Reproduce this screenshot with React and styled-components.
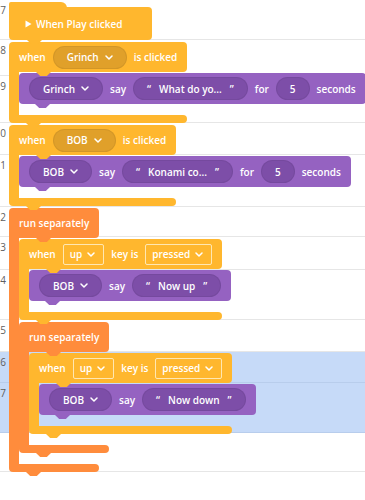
import React from 'react';
import styled, { createGlobalStyle, css } from 'styled-components';

const palette = {
  event: { bg: '#ffb72e', field: '#e0a02a' },
  looks: { bg: '#9562c1', field: '#7d4ea8' },
  control: { bg: '#ff8c3c', field: '#e0772c' },
};

const GlobalStyle = createGlobalStyle`
  html, body { margin: 0; padding: 0; background: #ffffff; }
  body {
    font-family: "Open Sans", "Liberation Sans", sans-serif;
    overflow: hidden;
  }
`;

// bump under a block, sits over the next block's top edge
const bump = css`
  &::after {
    content: "";
    position: absolute;
    left: ${p => p.$notch}px;
    bottom: -4px;
    width: 15px;
    height: 4px;
    background: ${p => p.$bg};
    clip-path: polygon(0 0, 100% 0, 72% 100%, 28% 100%);
    z-index: 2;
  }
`;

const Editor = styled.div`
  position: relative;
  width: 365px;
  height: 500px;
  overflow: hidden;
`;

const Rows = styled.div`
  position: absolute;
  inset: 0;
  z-index: 0;
  display: flex;
  flex-direction: column;
`;

const Row = styled.div`
  display: flex;
  box-sizing: border-box;
  height: ${p => p.$h}px;
  border-bottom: 1px solid ${p => (p.$active ? '#b8cdec' : '#e6e6e6')};
  background: ${p => (p.$active ? '#c6daf8' : 'transparent')};
`;

const LineNo = styled.div`
  width: 6px;
  display: flex;
  justify-content: flex-end;
  padding-top: 4px;
  font-size: 10px;
  line-height: 12px;
  color: #5f5f5f;
  white-space: nowrap;
`;

const Canvas = styled.div`
  position: relative;
  z-index: 1;
  padding: 2px 0 0 9px;
  display: flex;
  flex-direction: column;
  align-items: flex-start;
  gap: 2px;
`;

const Block = styled.div`
  position: relative;
  box-sizing: border-box;
  display: flex;
  align-items: center;
  gap: 7px;
  width: max-content;
  height: ${p => p.$h || 31}px;
  padding: 0 10px;
  background: ${p => p.$bg};
  border-radius: ${p => p.$radius || '4px'};
  color: #ffffff;
  font-size: 10px;
  font-weight: 600;
  white-space: nowrap;
  ${p => p.$notch != null && bump}
`;

const Hat = styled.div`
  display: flex;
  flex-direction: column;
  align-items: flex-start;
`;

const HatCap = styled.div`
  position: relative;
  z-index: 1;
  width: 58px;
  height: 6px;
  margin-bottom: -1px;
  background: ${p => p.$bg};
  border-radius: 5px 16px 0 0;
`;

const HatBody = styled(Block)`
  height: 33px;
  padding: 0 30px 0 16px;
  gap: 4px;
  border-radius: 0 4px 4px 4px;
`;

const CWrap = styled.div`
  display: flex;
  flex-direction: column;
  width: max-content;
`;

const CBody = styled.div`
  display: flex;
  contain: inline-size;
`;

const Arm = styled.div`
  width: 10px;
  flex-shrink: 0;
  background: ${p => p.$bg};
`;

const Inner = styled.div`
  display: flex;
  flex-direction: column;
  align-items: flex-start;
  gap: 2px;
  padding: 1px 0 11px;
`;

const Bar = styled.div`
  position: relative;
  height: 8px;
  background: ${p => p.$bg};
  border-radius: 0 4px 4px 4px;
  ${bump}
`;

const Pill = styled.div`
  box-sizing: border-box;
  display: flex;
  align-items: center;
  gap: ${p => p.$gap || 6}px;
  height: 23px;
  padding: 0 13px;
  border-radius: 12px;
  background: ${p => p.$bg};
  border: 1px solid rgba(0, 0, 0, 0.06);
`;

const Field = styled.div`
  box-sizing: border-box;
  display: flex;
  align-items: center;
  gap: 5px;
  height: 21px;
  padding: 0 8px 0 6px;
  border: 1px solid rgba(255, 240, 200, 0.85);
  border-radius: 2px;
`;

const Quote = styled.span`
  font-size: 10px;
`;

const Chevron = () => (
  <svg width="8" height="5" viewBox="0 0 8 5">
    <path d="M1 1l3 3 3-3" fill="none" stroke="#fff" strokeWidth="1.5" strokeLinecap="round" strokeLinejoin="round" />
  </svg>
);

const Play = () => (
  <svg width="7" height="8" viewBox="0 0 7 8">
    <path d="M0.5 0.5L6.5 4L0.5 7.5Z" fill="#fff" />
  </svg>
);

function Dropdown({ label, bg }) {
  return (
    <Pill $bg={bg}>
      <span>{label}</span>
      <Chevron />
    </Pill>
  );
}

function KeyField({ label }) {
  return (
    <Field>
      <span>{label}</span>
      <Chevron />
    </Field>
  );
}

function Say({ who, text, secs }) {
  const c = palette.looks;
  return (
    <Block $bg={c.bg} $notch={16}>
      <Dropdown label={who} bg={c.field} />
      <span>say</span>
      <Pill $bg={c.field} $gap={8}>
        <Quote>“</Quote>
        <span>{text}</span>
        <Quote>”</Quote>
      </Pill>
      {secs && (
        <>
          <span>for</span>
          <Pill $bg={c.field}>{secs}</Pill>
          <span>seconds</span>
        </>
      )}
    </Block>
  );
}

function CBlock({ color, header, children }) {
  return (
    <CWrap>
      <Block $bg={color} $h={30} $radius="4px 4px 4px 0" $notch={27}>
        {header}
      </Block>
      <CBody>
        <Arm $bg={color} />
        <Inner>{children}</Inner>
      </CBody>
      <Bar $bg={color} $notch={17} />
    </CWrap>
  );
}

function WhenClicked({ sprite, children }) {
  const c = palette.event;
  return (
    <CBlock
      color={c.bg}
      header={
        <>
          <span>when</span>
          <Dropdown label={sprite} bg={c.field} />
          <span>is clicked</span>
        </>
      }
    >
      {children}
    </CBlock>
  );
}

function WhenKey({ children }) {
  return (
    <CBlock
      color={palette.event.bg}
      header={
        <>
          <span>when</span>
          <KeyField label="up" />
          <span>key is</span>
          <KeyField label="pressed" />
        </>
      }
    >
      {children}
    </CBlock>
  );
}

function RunSeparately({ children }) {
  return (
    <CBlock color={palette.control.bg} header={<span>run separately</span>}>
      {children}
    </CBlock>
  );
}

const rows = [
  { n: 7, h: 40 },
  { n: 8, h: 36 },
  { n: 9, h: 47 },
  { n: 10, h: 32 },
  { n: 11, h: 52 },
  { n: 12, h: 30 },
  { n: 13, h: 33 },
  { n: 14, h: 50 },
  { n: 15, h: 32 },
  { n: 16, h: 31, active: true },
  { n: 17, h: 50, active: true },
  { n: '', h: 39 },
];

export default function App() {
  return (
    <>
      <GlobalStyle />
      <Editor>
        <Rows>
          {rows.map((r, i) => (
            <Row key={i} $h={r.h} $active={r.active}>
              <LineNo>{r.n}</LineNo>
            </Row>
          ))}
        </Rows>
        <Canvas>
          <Hat>
            <HatCap $bg={palette.event.bg} />
            <HatBody $bg={palette.event.bg} $notch={18}>
              <Play />
              <span>When Play clicked</span>
            </HatBody>
          </Hat>
          <WhenClicked sprite="Grinch">
            <Say who="Grinch" text="What do yo..." secs="5" />
          </WhenClicked>
          <WhenClicked sprite="BOB">
            <Say who="BOB" text="Konami co..." secs="5" />
          </WhenClicked>
          <RunSeparately>
            <WhenKey>
              <Say who="BOB" text="Now up" />
            </WhenKey>
            <RunSeparately>
              <WhenKey>
                <Say who="BOB" text="Now down" />
              </WhenKey>
            </RunSeparately>
          </RunSeparately>
        </Canvas>
      </Editor>
    </>
  );
}
